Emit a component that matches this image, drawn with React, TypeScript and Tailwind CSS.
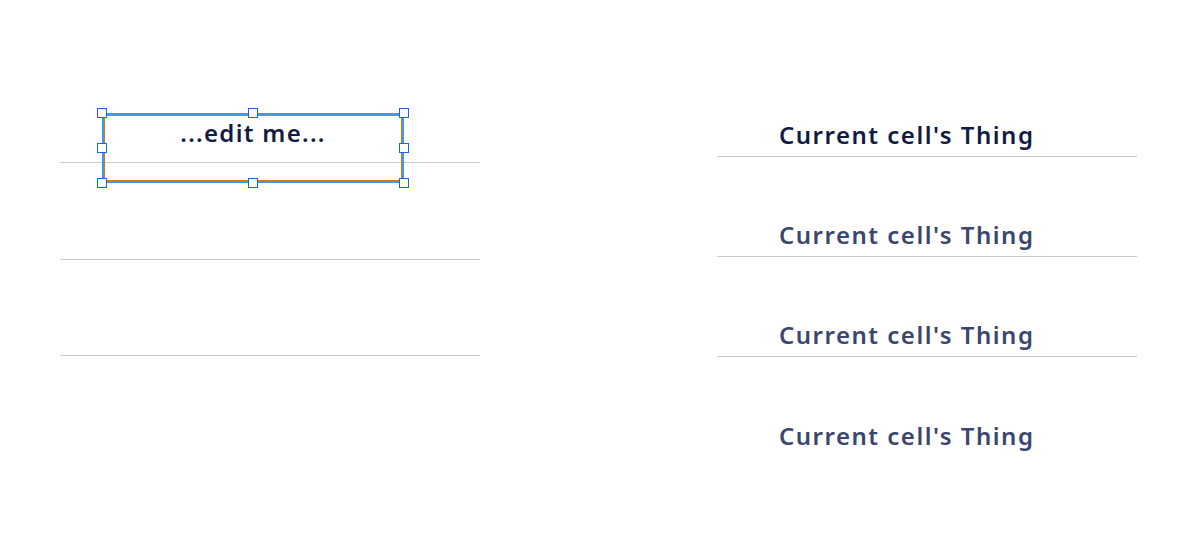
const font = { fontFamily: '"Noto Sans", "Open Sans", sans-serif' };

const things = ["Current cell's Thing", "Current cell's Thing", "Current cell's Thing", "Current cell's Thing"];

function Handle({ className }: { className: string }) {
  return (
    <span
      className={`absolute h-[10px] w-[10px] border border-[#1565e8] bg-white ${className}`}
    />
  );
}

function EditBox() {
  return (
    <div className="absolute left-[42px] top-[46px] h-[70px] w-[302px] border-2 border-[#3b9af0]">
      <div className="flex h-full w-full justify-center shadow-[inset_0_0_0_1px_#e07800]">
        <span className="text-[24px] font-semibold leading-9 tracking-[1.3px] text-[#141a45]">
          ...edit me...
        </span>
      </div>
      <Handle className="-left-[7px] -top-[7px]" />
      <Handle className="left-1/2 -top-[7px] -translate-x-1/2" />
      <Handle className="-right-[7px] -top-[7px]" />
      <Handle className="-left-[7px] top-1/2 -translate-y-1/2" />
      <Handle className="-right-[7px] top-1/2 -translate-y-1/2" />
      <Handle className="-left-[7px] -bottom-[7px]" />
      <Handle className="left-1/2 -bottom-[7px] -translate-x-1/2" />
      <Handle className="-right-[7px] -bottom-[7px]" />
    </div>
  );
}

export default function App() {
  return (
    <div className="flex h-[538px] w-[1200px] gap-[237px] bg-white pl-[60px]" style={font}>
      {/* editing grid */}
      <div className="mt-[67px] w-[420px]">
        <div className="relative h-[96px] border-b border-[#cccccc]">
          <EditBox />
        </div>
        <div className="h-[97px] border-b border-[#cccccc]" />
        <div className="h-[96px] border-b border-[#cccccc]" />
      </div>

      {/* preview list */}
      <div className="mt-[57px] w-[420px]">
        {things.map((t, i) => (
          <div
            key={i}
            className={`flex h-[100px] items-end pl-[62px] ${
              i < 3 ? "border-b border-[#cccccc]" : ""
            }`}
          >
            <span
              className={`pb-[3px] text-[24px] font-semibold leading-9 tracking-[1.5px] ${
                i === 0 ? "text-[#111a45]" : "text-[#3b4670]"
              }`}
            >
              {t}
            </span>
          </div>
        ))}
      </div>
    </div>
  );
}
